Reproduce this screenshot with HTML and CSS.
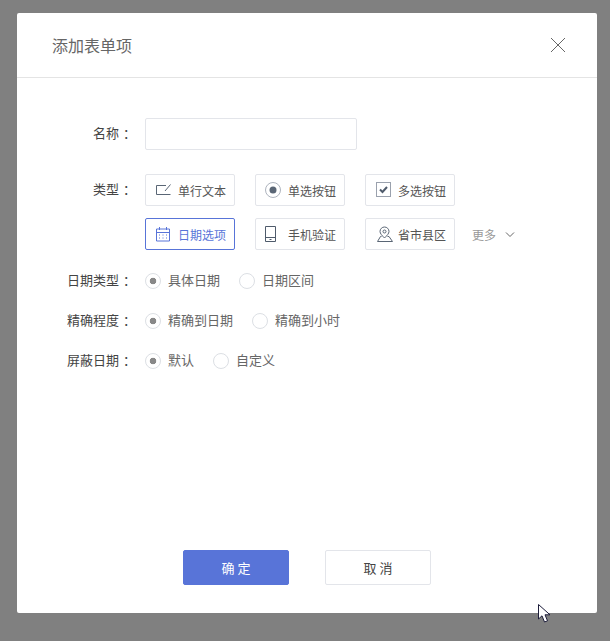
FILE: index.html
```html
<!DOCTYPE html>
<html lang="zh">
<head>
<meta charset="utf-8">
<title>添加表单项</title>
<link rel="stylesheet" href="styles.css">
</head>
<body>
<div class="dialog">
  <header class="head">
    <h1 class="title">添加表单项</h1>
    <svg class="close" width="16" height="16" viewBox="0 0 16 16"><path d="M1 1L15 15M15 1L1 15" stroke="#666" stroke-width="1" fill="none"/></svg>
  </header>
  <div class="body">
    <div class="row row-name">
      <span class="label">名称<span class="colon">：</span></span>
      <input class="input" type="text">
    </div>
    <div class="row row-type">
      <span class="label label-type">类型<span class="colon">：</span></span>
      <div class="types">
        <div class="type">
          <svg class="ico" width="16" height="16" viewBox="0 0 16 16"><path d="M11 3.500H1.500V12.500H15.500M10 9L15.500 2.500" stroke="#5a6675" fill="none"/></svg>
          <span>单行文本</span>
        </div>
        <div class="type">
          <svg class="ico" width="16" height="16" viewBox="0 0 16 16"><circle cx="8" cy="8" r="7.500" fill="none" stroke="#aeb4be"/><circle cx="8" cy="8" r="3.500" fill="#5a6675"/></svg>
          <span>单选按钮</span>
        </div>
        <div class="type">
          <svg class="ico" width="16" height="16" viewBox="0 0 16 16"><rect x="1.500" y="0.500" width="14" height="14" fill="none" stroke="#9aa1ad"/><path d="M5 7.500L7.500 10L12 5" fill="none" stroke="#4f5b6b" stroke-width="2"/></svg>
          <span>多选按钮</span>
        </div>
        <div class="type active">
          <svg class="ico" width="16" height="16" viewBox="0 0 16 16"><path d="M1.500 3H14.500V15H1.500ZM1.500 6.500H14.500M4.500 1V4M11.500 1V4" fill="none" stroke="#5874d8"/><path d="M4 9h1M7.500 9h1M11 9h1M4 12h1M7.500 12h1M11 12h1" stroke="#5874d8"/></svg>
          <span>日期选项</span>
        </div>
        <div class="type">
          <svg class="ico" width="16" height="16" viewBox="0 0 16 16"><path d="M0.500 0.500H10.500V15.500H0.500ZM0.500 11.500H10.500M4.500 13.500H6.500" fill="none" stroke="#4f5b6b"/></svg>
          <span>手机验证</span>
        </div>
        <div class="type type-tight">
          <svg class="ico" width="16" height="16" viewBox="0 0 16 16"><path d="M7.500 12C5 9.500 3 7.500 3 5.500A4.500 4.500 0 0 1 12 5.500C12 7.500 10 9.500 7.500 12Z" fill="none" stroke="#5a6675"/><circle cx="7.500" cy="5.500" r="1.500" fill="none" stroke="#5a6675"/><path d="M4.500 10.500H3.500L0.500 15.500H15.500L12 10.500H10.500" fill="none" stroke="#5a6675"/></svg>
          <span>省市县区</span>
        </div>
        <div class="more">
          <span>更多</span>
          <svg width="10" height="6" viewBox="0 0 10 6"><path d="M1 1.500L5 5.500L9 1.500" fill="none" stroke="#666"/></svg>
        </div>
      </div>
    </div>
    <div class="row row-opt">
      <span class="label">日期类型<span class="colon">：</span></span>
      <div class="radios">
        <span class="radio on">具体日期</span>
        <span class="radio">日期区间</span>
      </div>
    </div>
    <div class="row row-opt">
      <span class="label">精确程度<span class="colon">：</span></span>
      <div class="radios">
        <span class="radio on">精确到日期</span>
        <span class="radio">精确到小时</span>
      </div>
    </div>
    <div class="row row-opt">
      <span class="label">屏蔽日期<span class="colon">：</span></span>
      <div class="radios">
        <span class="radio on">默认</span>
        <span class="radio">自定义</span>
      </div>
    </div>
  </div>
  <footer class="foot">
    <button class="btn primary" type="button">确 定</button>
    <button class="btn" type="button">取 消</button>
  </footer>
</div>
<svg class="cursor" width="16" height="22" viewBox="0 0 16 22"><path d="M1.500 1.500V16L5 12.800L7.500 19L10.500 17.800L8 11.800H13Z" fill="#fff" stroke="#1c1c3a" stroke-width="1"/></svg>
</body>
</html>
```
FILE: styles.css
```css
* { box-sizing: border-box; }
html, body { margin: 0; height: 100%; }
body {
  position: relative;
  width: 610px;
  height: 641px;
  overflow: hidden;
  background: #808080;
  padding: 13px 13px 28px 17px;
  font-family: "Noto Sans CJK SC", "Liberation Sans", sans-serif;
  font-size: 12px;
  color: #555;
}
.dialog {
  width: 580px;
  height: 600px;
  background: #fff;
  border-radius: 2px;
  display: flex;
  flex-direction: column;
}
.head {
  height: 65px;
  flex: none;
  border-bottom: 1px solid #e4e4e4;
  padding: 0 31px 0 35px;
  display: flex;
  align-items: center;
  justify-content: space-between;
}
.title {
  margin: 0;
  font-size: 16px;
  font-weight: 400;
  color: #666;
}
.close { display: block; }
.body {
  flex: 1;
  padding-top: 40px;
}
.row { display: flex; }
.label {
  width: 115px;
  margin-right: 13px;
  flex: none;
  text-align: right;
  color: #444;
  font-size: 13px;
  line-height: 30px;
}
.colon {
  display: inline-block;
  padding-left: 4px;
  margin-right: -4px;
}
.input {
  display: block;
  width: 212px;
  height: 32px;
  border: 1px solid #e3e5ea;
  border-radius: 2px;
  background: #fff;
  outline: none;
}
.row-type { margin-top: 24px; }
.types {
  width: 400px;
  display: flex;
  flex-wrap: wrap;
  gap: 12px 20px;
}
.type {
  width: 90px;
  height: 32px;
  border: 1px solid #e3e5ea;
  border-radius: 2px;
  padding-left: 9px;
  display: flex;
  align-items: center;
  gap: 7px;
  color: #555;
}
.type.active {
  border-color: #5874d8;
  color: #5874d8;
}
.type-tight { gap: 5px; padding-left: 11px; }
.ico { flex: none; display: block; }
.more {
  display: flex;
  align-items: center;
  gap: 9px;
  margin-left: -3px;
  height: 32px;
  color: #999;
}
.row-opt {
  height: 32px;
  margin-top: 8px;
}
.row-opt:nth-child(3) { margin-top: 15px; }
.radios {
  display: flex;
  gap: 19px;
  padding-top: 8px;
}
.radio {
  display: flex;
  align-items: flex-start;
  gap: 7px;
  height: 16px;
  color: #666;
  font-size: 13px;
  line-height: 14px;
}
.radio::before {
  content: "";
  box-sizing: border-box;
  width: 16px;
  height: 16px;
  border-radius: 50%;
  border: 1px solid #dcdfe4;
  flex: none;
  background: #fff;
}
.radio.on::before {
  background: radial-gradient(circle, #888 0, #888 3px, #fff 3.6px);
}
.foot {
  flex: none;
  height: 63px;
  display: flex;
  justify-content: center;
  gap: 36px;
}
.btn {
  width: 106px;
  height: 35px;
  border: 1px solid #e3e5ea;
  border-radius: 2px;
  background: #fff;
  color: #444;
  font: inherit;
  font-size: 13px;
  padding: 0;
}
.btn.primary {
  border-color: #5874d8;
  background: #5874d8;
  color: #fff;
}
.cursor {
  position: absolute;
  left: 537px;
  top: 603px;
}
```
